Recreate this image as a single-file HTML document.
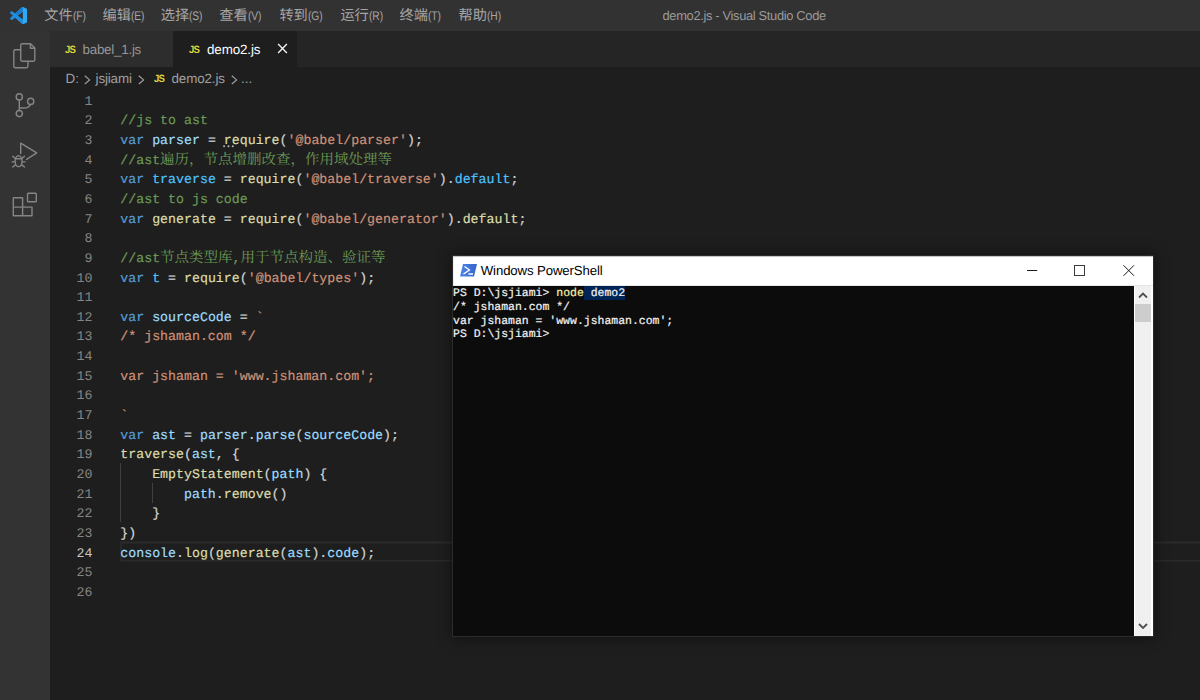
<!DOCTYPE html>
<html><head><meta charset="utf-8"><title>demo2.js - Visual Studio Code</title>
<style>
*{box-sizing:border-box;margin:0;padding:0}
html,body{width:1200px;height:700px;overflow:hidden;background:#1e1e1e;font-family:"Liberation Sans",sans-serif;text-rendering:geometricPrecision}
#app{position:relative;width:1200px;height:700px;overflow:hidden;background:#1e1e1e}
.abs{position:absolute}
i.cjm{font-style:normal;font-size:14.2px;color:#a6a6a6;font-family:"Liberation Sans","Noto Sans CJK SC",sans-serif;line-height:1}
i.cjc{font-style:normal;font-size:14.5px;color:#6A9955;font-family:"Liberation Serif","Noto Serif CJK SC",serif;line-height:1;-webkit-text-stroke:0}
/* title bar */
#titlebar{position:absolute;left:0;top:0;width:1200px;height:31px;background:#323233;color:#9a9a9a;font-size:13.4px}
.mi{position:absolute;top:0px;height:31px;line-height:31px;white-space:nowrap;color:#9a9a9a;font-size:13.4px}
.mi span{display:inline-block;letter-spacing:-0.1px;font-size:12.5px;position:relative;top:0.3px;margin-left:0.2px;color:#a6a6a6;transform:scaleX(0.82);transform-origin:0 50%}
#wtitle{position:absolute;left:662.5px;top:0;height:31px;line-height:31px;white-space:nowrap;color:#9a9a9a;font-size:12.9px;letter-spacing:-0.34px}
/* activity bar */
#activity{position:absolute;left:0;top:31px;width:50px;height:669px;background:#333333}
/* tabs */
#tabs{position:absolute;left:50px;top:31px;width:1150px;height:36.3px;background:#252526}
.tab{position:absolute;top:0;height:36.3px;font-size:13.4px;line-height:37.7px;white-space:nowrap}
.js{position:absolute;font-weight:bold;font-size:10.6px;color:#ddd53e;letter-spacing:-0.9px;transform:scaleX(0.9);transform-origin:0 0}
/* breadcrumb */
#crumbs{position:absolute;left:50px;top:67.3px;width:1150px;height:23px;background:#1e1e1e;color:#a0a0a0;font-size:13.4px;line-height:24.6px;white-space:nowrap}
#crumbs span{position:absolute;top:0}
/* editor */
.ln{position:absolute;left:50px;width:42.4px;text-align:right;height:19.64px;line-height:19.64px;padding-top:1.6px;color:#858585;font-family:"Liberation Mono",monospace;font-size:13.27px;white-space:pre}
.ln.act{color:#c6c6c6}
.cl{position:absolute;left:120.3px;height:19.64px;line-height:19.64px;padding-top:1.6px;-webkit-text-stroke:0.2px currentColor;color:#D4D4D4;font-family:"Liberation Mono",monospace;font-size:13.27px;white-space:pre}
.guide{position:absolute;width:1px;background:#404040}
#curline{position:absolute;left:120px;top:541.4px;width:1080px;height:20.4px;border:1.6px solid #282828;border-right:none}
/* powershell */
#ps{position:absolute;left:453px;top:256px;width:699.5px;height:380px;background:#ffffff;box-shadow:0 0 0 1px #2b2b2b,0 0 14px 2px rgba(0,0,0,0.45)}
#pstitle{position:absolute;left:0;top:0;width:100%;height:30px;background:#fff;box-shadow:inset 0 1px 0 #c4c4c4, inset 1px 0 0 #ececec, inset 0 -1px 0 #e6e6e6}
#pstext{position:absolute;left:27.8px;top:0;height:30px;line-height:29px;font-size:13.2px;letter-spacing:-0.12px;color:#000;white-space:nowrap}
#console{position:absolute;left:0;top:30px;width:681px;height:349.5px;background:#0c0c0c;overflow:hidden}
.pl{position:absolute;left:0;height:13.7px;line-height:13.7px;font-family:"Liberation Mono",monospace;font-size:11.47px;color:#f2f2f2;white-space:pre;-webkit-text-stroke:0.2px currentColor}
#sbar{position:absolute;left:682px;top:30px;width:16px;height:349.5px;background:#f0f0f0}
#thumb{position:absolute;left:0;top:18px;width:16px;height:17.5px;background:#cdcdcd}
</style></head>
<body>
<div id="app">

<div id="titlebar">
  <svg class="abs" style="left:10px;top:7px" width="17.2" height="17.2" viewBox="0 0 100 100">
    <path fill="#1f8ee0" fill-rule="evenodd" d="M74.9 99.3a6.2 6.2 0 0 0 4.96-.19l20.59-9.9A6.25 6.25 0 0 0 100 83.59V16.41a6.25 6.25 0 0 0-3.54-5.63L75.87.88a6.23 6.23 0 0 0-7.1 1.21L29.35 38.04 12.19 25.01a4.16 4.16 0 0 0-5.32.24l-5.5 5.01a4.17 4.17 0 0 0 0 6.16L16.25 50 1.37 63.58a4.17 4.17 0 0 0 0 6.16l5.5 5a4.16 4.16 0 0 0 5.32.24l17.16-13.03 39.42 35.96a6.22 6.22 0 0 0 2.13 1.39zM75 27.3L45.1 50 75 72.7V27.3z"/>
    <path fill="#1a7dcb" d="M68.8 2.1 L75 0.6 V27.3 L45.1 50 L29.35 38.04 Z"/>
    <path fill="#30a9f4" d="M75 0.6 L96.5 10.8 A6.25 6.25 0 0 1 100 16.4 V83.6 A6.25 6.25 0 0 1 96.5 89.2 L75 99.4 Z"/>
  </svg>
  <div class="mi" style="left:44.2px"><i class="cjm">文件</i><span>(F)</span></div><div class="mi" style="left:102.5px"><i class="cjm">编辑</i><span>(E)</span></div><div class="mi" style="left:160.8px"><i class="cjm">选择</i><span>(S)</span></div><div class="mi" style="left:219.2px"><i class="cjm">查看</i><span>(V)</span></div><div class="mi" style="left:279.4px"><i class="cjm">转到</i><span>(G)</span></div><div class="mi" style="left:340.4px"><i class="cjm">运行</i><span>(R)</span></div><div class="mi" style="left:399.6px"><i class="cjm">终端</i><span>(T)</span></div><div class="mi" style="left:458.5px"><i class="cjm">帮助</i><span>(H)</span></div>
  <div id="wtitle">demo2.js - Visual Studio Code</div>
</div>

<div id="activity">
  <!-- files -->
  <svg class="abs" style="left:0;top:0" width="50" height="200" viewBox="0 31 50 200" fill="none" stroke="#858585" stroke-width="1.4" stroke-linejoin="round" stroke-linecap="round">
    <path d="M20.6 49.7 H15.3 a1.5 1.5 0 0 0 -1.5 1.5 V66.2 a1.5 1.5 0 0 0 1.5 1.5 H26.4 a1.5 1.5 0 0 0 1.5 -1.5 V62"/>
    <path d="M22.2 43.8 H30.6 L34.8 48 V59.8 a1.5 1.5 0 0 1 -1.5 1.5 H22.2 a1.5 1.5 0 0 1 -1.5 -1.5 V45.3 a1.5 1.5 0 0 1 1.5 -1.5 Z M30.4 44 V48.3 H34.6"/>
    <!-- scm -->
    <circle cx="19.3" cy="96.9" r="3.1"/><circle cx="19.3" cy="113.6" r="3.1"/><circle cx="30.7" cy="101.4" r="3.1"/>
    <path d="M19.3 100 V110.5 M30.2 104.5 C29.5 108 26 108 20 108"/>
    <!-- debug -->
    <path d="M20.7 153.4 V143.2 L36.7 152.9 L26.6 159.4"/>
    <ellipse cx="18.6" cy="161.2" rx="3.5" ry="5.4"/>
    <path d="M15.4 158.8 H21.8 M15.3 158.4 L12.7 156.3 M21.9 158.4 L24.5 156.3 M15 161.9 H12.1 M22.2 161.9 H25.1 M15.5 164.9 L12.7 167 M21.7 164.9 L24.5 167"/>
    <!-- extensions -->
    <path d="M13.3 197.8 H22.6 V207.1 H32 V215.7 H13.3 Z M13.3 207.1 H22.6 V215.7"/>
    <rect x="27.5" y="193.2" width="8.8" height="8.5" rx="0.8"/>
  </svg>
</div>

<div id="tabs">
  <div class="tab" style="left:0;width:123.3px;background:#2d2d2d"></div>
  <div class="tab" style="left:123.3px;width:123.7px;background:#1e1e1e"></div>
  <span class="js" style="left:14.8px;top:0;line-height:38px">JS</span>
  <span class="tab" style="left:32.5px;color:#969696;letter-spacing:-0.25px" id="t1">babel_1.js</span>
  <span class="js" style="left:139px;top:0;line-height:38px">JS</span>
  <span class="tab" style="left:157px;color:#ffffff;letter-spacing:-0.12px" id="t2">demo2.js</span>
  <svg class="abs" style="left:227px;top:12.4px" width="11" height="11" viewBox="0 0 11 11"><path d="M1.1 1.1 L9.9 9.9 M9.9 1.1 L1.1 9.9" stroke="#f4f4f4" stroke-width="1.35" fill="none"/></svg>
</div>

<div id="crumbs">
  <span style="left:15.5px" id="b1">D:</span>
  <svg class="abs" style="left:34px;top:7.6px" width="7" height="10" viewBox="0 0 7 10"><path d="M0.8 0.8 L5.6 4.9 L0.8 9" stroke="#a0a0a0" stroke-width="1.15" fill="none"/></svg>
  <span style="left:45.6px;letter-spacing:-0.15px" id="b2">jsjiami</span>
  <svg class="abs" style="left:87.6px;top:7.6px" width="7" height="10" viewBox="0 0 7 10"><path d="M0.8 0.8 L5.6 4.9 L0.8 9" stroke="#a0a0a0" stroke-width="1.15" fill="none"/></svg>
  <span class="js" style="left:103.5px;top:0;line-height:24px">JS</span>
  <span style="left:121.5px;letter-spacing:-0.12px" id="b3">demo2.js</span>
  <svg class="abs" style="left:180.8px;top:7.6px" width="7" height="10" viewBox="0 0 7 10"><path d="M0.8 0.8 L5.6 4.9 L0.8 9" stroke="#a0a0a0" stroke-width="1.15" fill="none"/></svg>
  <span style="left:191px" id="b4">...</span>
</div>

<svg class="abs" style="left:120px;top:538px" width="1080" height="28" viewBox="0 0 1080 28"><path d="M0.9 3.6 H1080 V5.5 H2 V21.7 H1080 V23.6 H0.2 V3.6 Z" fill="#2a2a2a"/></svg>
<div class="guide" style="left:120px;top:463.4px;height:58.9px"></div>
<div class="guide" style="left:152px;top:483px;height:19.64px"></div>
<div class="ln" style="top:90.20px">1</div><div class="cl" style="top:90.20px"></div>
<div class="ln" style="top:109.84px">2</div><div class="cl" style="top:109.84px"><span style="color:#6A9955">//js to ast</span></div>
<div class="ln" style="top:129.48px">3</div><div class="cl" style="top:129.48px"><span style="color:#569CD6">var</span> <span style="color:#9CDCFE">parser</span><span style="color:#D4D4D4"> = </span><span style="color:#DCDCAA">require</span><span style="color:#D4D4D4">(</span><span style="color:#CE9178">&#x27;@babel/parser&#x27;</span><span style="color:#D4D4D4">);</span></div>
<div class="ln" style="top:149.12px">4</div><div class="cl" style="top:149.12px"><span style="color:#6A9955">//ast<i class="cjc">遍历，节点增删改查，作用域处理等</i></span></div>
<div class="ln" style="top:168.76px">5</div><div class="cl" style="top:168.76px"><span style="color:#569CD6">var</span> <span style="color:#4FC1FF">traverse</span><span style="color:#D4D4D4"> = </span><span style="color:#DCDCAA">require</span><span style="color:#D4D4D4">(</span><span style="color:#CE9178">&#x27;@babel/traverse&#x27;</span><span style="color:#D4D4D4">).</span><span style="color:#4FC1FF">default</span><span style="color:#D4D4D4">;</span></div>
<div class="ln" style="top:188.40px">6</div><div class="cl" style="top:188.40px"><span style="color:#6A9955">//ast to js code</span></div>
<div class="ln" style="top:208.04px">7</div><div class="cl" style="top:208.04px"><span style="color:#569CD6">var</span> <span style="color:#DCDCAA">generate</span><span style="color:#D4D4D4"> = </span><span style="color:#DCDCAA">require</span><span style="color:#D4D4D4">(</span><span style="color:#CE9178">&#x27;@babel/generator&#x27;</span><span style="color:#D4D4D4">).</span><span style="color:#DCDCAA">default</span><span style="color:#D4D4D4">;</span></div>
<div class="ln" style="top:227.68px">8</div><div class="cl" style="top:227.68px"></div>
<div class="ln" style="top:247.32px">9</div><div class="cl" style="top:247.32px"><span style="color:#6A9955">//ast<i class="cjc">节点类型库</i>,<i class="cjc">用于节点构造、验证等</i></span></div>
<div class="ln" style="top:266.96px">10</div><div class="cl" style="top:266.96px"><span style="color:#569CD6">var</span> <span style="color:#4FC1FF">t</span><span style="color:#D4D4D4"> = </span><span style="color:#DCDCAA">require</span><span style="color:#D4D4D4">(</span><span style="color:#CE9178">&#x27;@babel/types&#x27;</span><span style="color:#D4D4D4">);</span></div>
<div class="ln" style="top:286.60px">11</div><div class="cl" style="top:286.60px"></div>
<div class="ln" style="top:306.24px">12</div><div class="cl" style="top:306.24px"><span style="color:#569CD6">var</span> <span style="color:#9CDCFE">sourceCode</span><span style="color:#D4D4D4"> = </span><span style="color:#CE9178">`</span></div>
<div class="ln" style="top:325.88px">13</div><div class="cl" style="top:325.88px"><span style="color:#CE9178">/* jshaman.com */</span></div>
<div class="ln" style="top:345.52px">14</div><div class="cl" style="top:345.52px"></div>
<div class="ln" style="top:365.16px">15</div><div class="cl" style="top:365.16px"><span style="color:#CE9178">var jshaman = &#x27;www.jshaman.com&#x27;;</span></div>
<div class="ln" style="top:384.80px">16</div><div class="cl" style="top:384.80px"></div>
<div class="ln" style="top:404.44px">17</div><div class="cl" style="top:404.44px"><span style="color:#CE9178">`</span></div>
<div class="ln" style="top:424.08px">18</div><div class="cl" style="top:424.08px"><span style="color:#569CD6">var</span> <span style="color:#9CDCFE">ast</span><span style="color:#D4D4D4"> = </span><span style="color:#9CDCFE">parser</span><span style="color:#D4D4D4">.</span><span style="color:#9CDCFE">parse</span><span style="color:#D4D4D4">(</span><span style="color:#9CDCFE">sourceCode</span><span style="color:#D4D4D4">);</span></div>
<div class="ln" style="top:443.72px">19</div><div class="cl" style="top:443.72px"><span style="color:#DCDCAA">traverse</span><span style="color:#D4D4D4">(</span><span style="color:#9CDCFE">ast</span><span style="color:#D4D4D4">, {</span></div>
<div class="ln" style="top:463.36px">20</div><div class="cl" style="top:463.36px">    <span style="color:#DCDCAA">EmptyStatement</span><span style="color:#D4D4D4">(</span><span style="color:#9CDCFE">path</span><span style="color:#D4D4D4">) {</span></div>
<div class="ln" style="top:483.00px">21</div><div class="cl" style="top:483.00px">        <span style="color:#9CDCFE">path</span><span style="color:#D4D4D4">.</span><span style="color:#DCDCAA">remove</span><span style="color:#D4D4D4">()</span></div>
<div class="ln" style="top:502.64px">22</div><div class="cl" style="top:502.64px">    <span style="color:#D4D4D4">}</span></div>
<div class="ln" style="top:522.28px">23</div><div class="cl" style="top:522.28px"><span style="color:#D4D4D4">})</span></div>
<div class="ln act" style="top:541.92px">24</div><div class="cl" style="top:541.92px"><span style="color:#9CDCFE">console</span><span style="color:#D4D4D4">.</span><span style="color:#DCDCAA">log</span><span style="color:#D4D4D4">(</span><span style="color:#DCDCAA">generate</span><span style="color:#D4D4D4">(</span><span style="color:#9CDCFE">ast</span><span style="color:#D4D4D4">).</span><span style="color:#9CDCFE">code</span><span style="color:#D4D4D4">);</span></div>
<div class="ln" style="top:561.56px">25</div><div class="cl" style="top:561.56px"></div>
<div class="ln" style="top:581.20px">26</div><div class="cl" style="top:581.20px"></div>

<!-- hint dots under require on line 3 -->
<svg class="abs" style="left:222px;top:144px" width="14" height="5" viewBox="0 0 14 5" fill="#b4b4b4"><circle cx="2.1" cy="2.3" r="1.05"/><circle cx="6.5" cy="2.3" r="1.05"/><circle cx="10.8" cy="2.3" r="1.05"/></svg>

<div id="ps">
  <div id="pstitle">
    <svg class="abs" style="left:7px;top:8px" width="17" height="12.5" viewBox="0 0 34 25">
      <path d="M6 0 H34 L28 25 H0 Z" fill="url(#psg)"/><defs><linearGradient id="psg" x1="0" y1="0" x2="1" y2="0"><stop offset="0" stop-color="#4f86e8"/><stop offset="1" stop-color="#3565cc"/></linearGradient></defs>
      <path d="M9 5 L19 12 L7 20" stroke="#fff" stroke-width="3" fill="none" stroke-linejoin="round"/>
      <path d="M17 20 H26" stroke="#fff" stroke-width="3"/>
    </svg>
    <div id="pstext">Windows PowerShell</div>
    <svg class="abs" style="left:560px;top:0" width="139" height="30" viewBox="0 0 139 30" fill="none" stroke="#1a1a1a" stroke-width="1">
      <path d="M14 14.5 H24.2"/>
      <rect x="61.5" y="9.5" width="10" height="10" stroke="#3a3a3a"/>
      <path d="M110.5 9.3 L121 19.8 M121 9.3 L110.5 19.8"/>
    </svg>
  </div>
  <div id="console">
    <div class="abs" style="left:130.7px;top:0;width:41.5px;height:13.7px;background:#012456"></div>
    <div class="pl" style="top:1px">PS D:\jsjiami&gt; <span style="color:#f9f1a5">node</span> demo2</div>
    <div class="pl" style="top:15px">/* jshaman.com */</div>
    <div class="pl" style="top:28.6px">var jshaman = 'www.jshaman.com';</div>
    <div class="pl" style="top:42.2px">PS D:\jsjiami&gt;</div>
  </div>
  <div id="sbar">
    <div id="thumb"></div>
    <svg class="abs" style="left:0;top:0" width="16" height="349.5" viewBox="0 0 16 349.5" fill="none" stroke="#505050" stroke-width="1.8">
      <path d="M4 11.5 L8 7.5 L12 11.5"/>
      <path d="M4 338 L8 342 L12 338"/>
    </svg>
  </div>
</div>

</div>
</body></html>
